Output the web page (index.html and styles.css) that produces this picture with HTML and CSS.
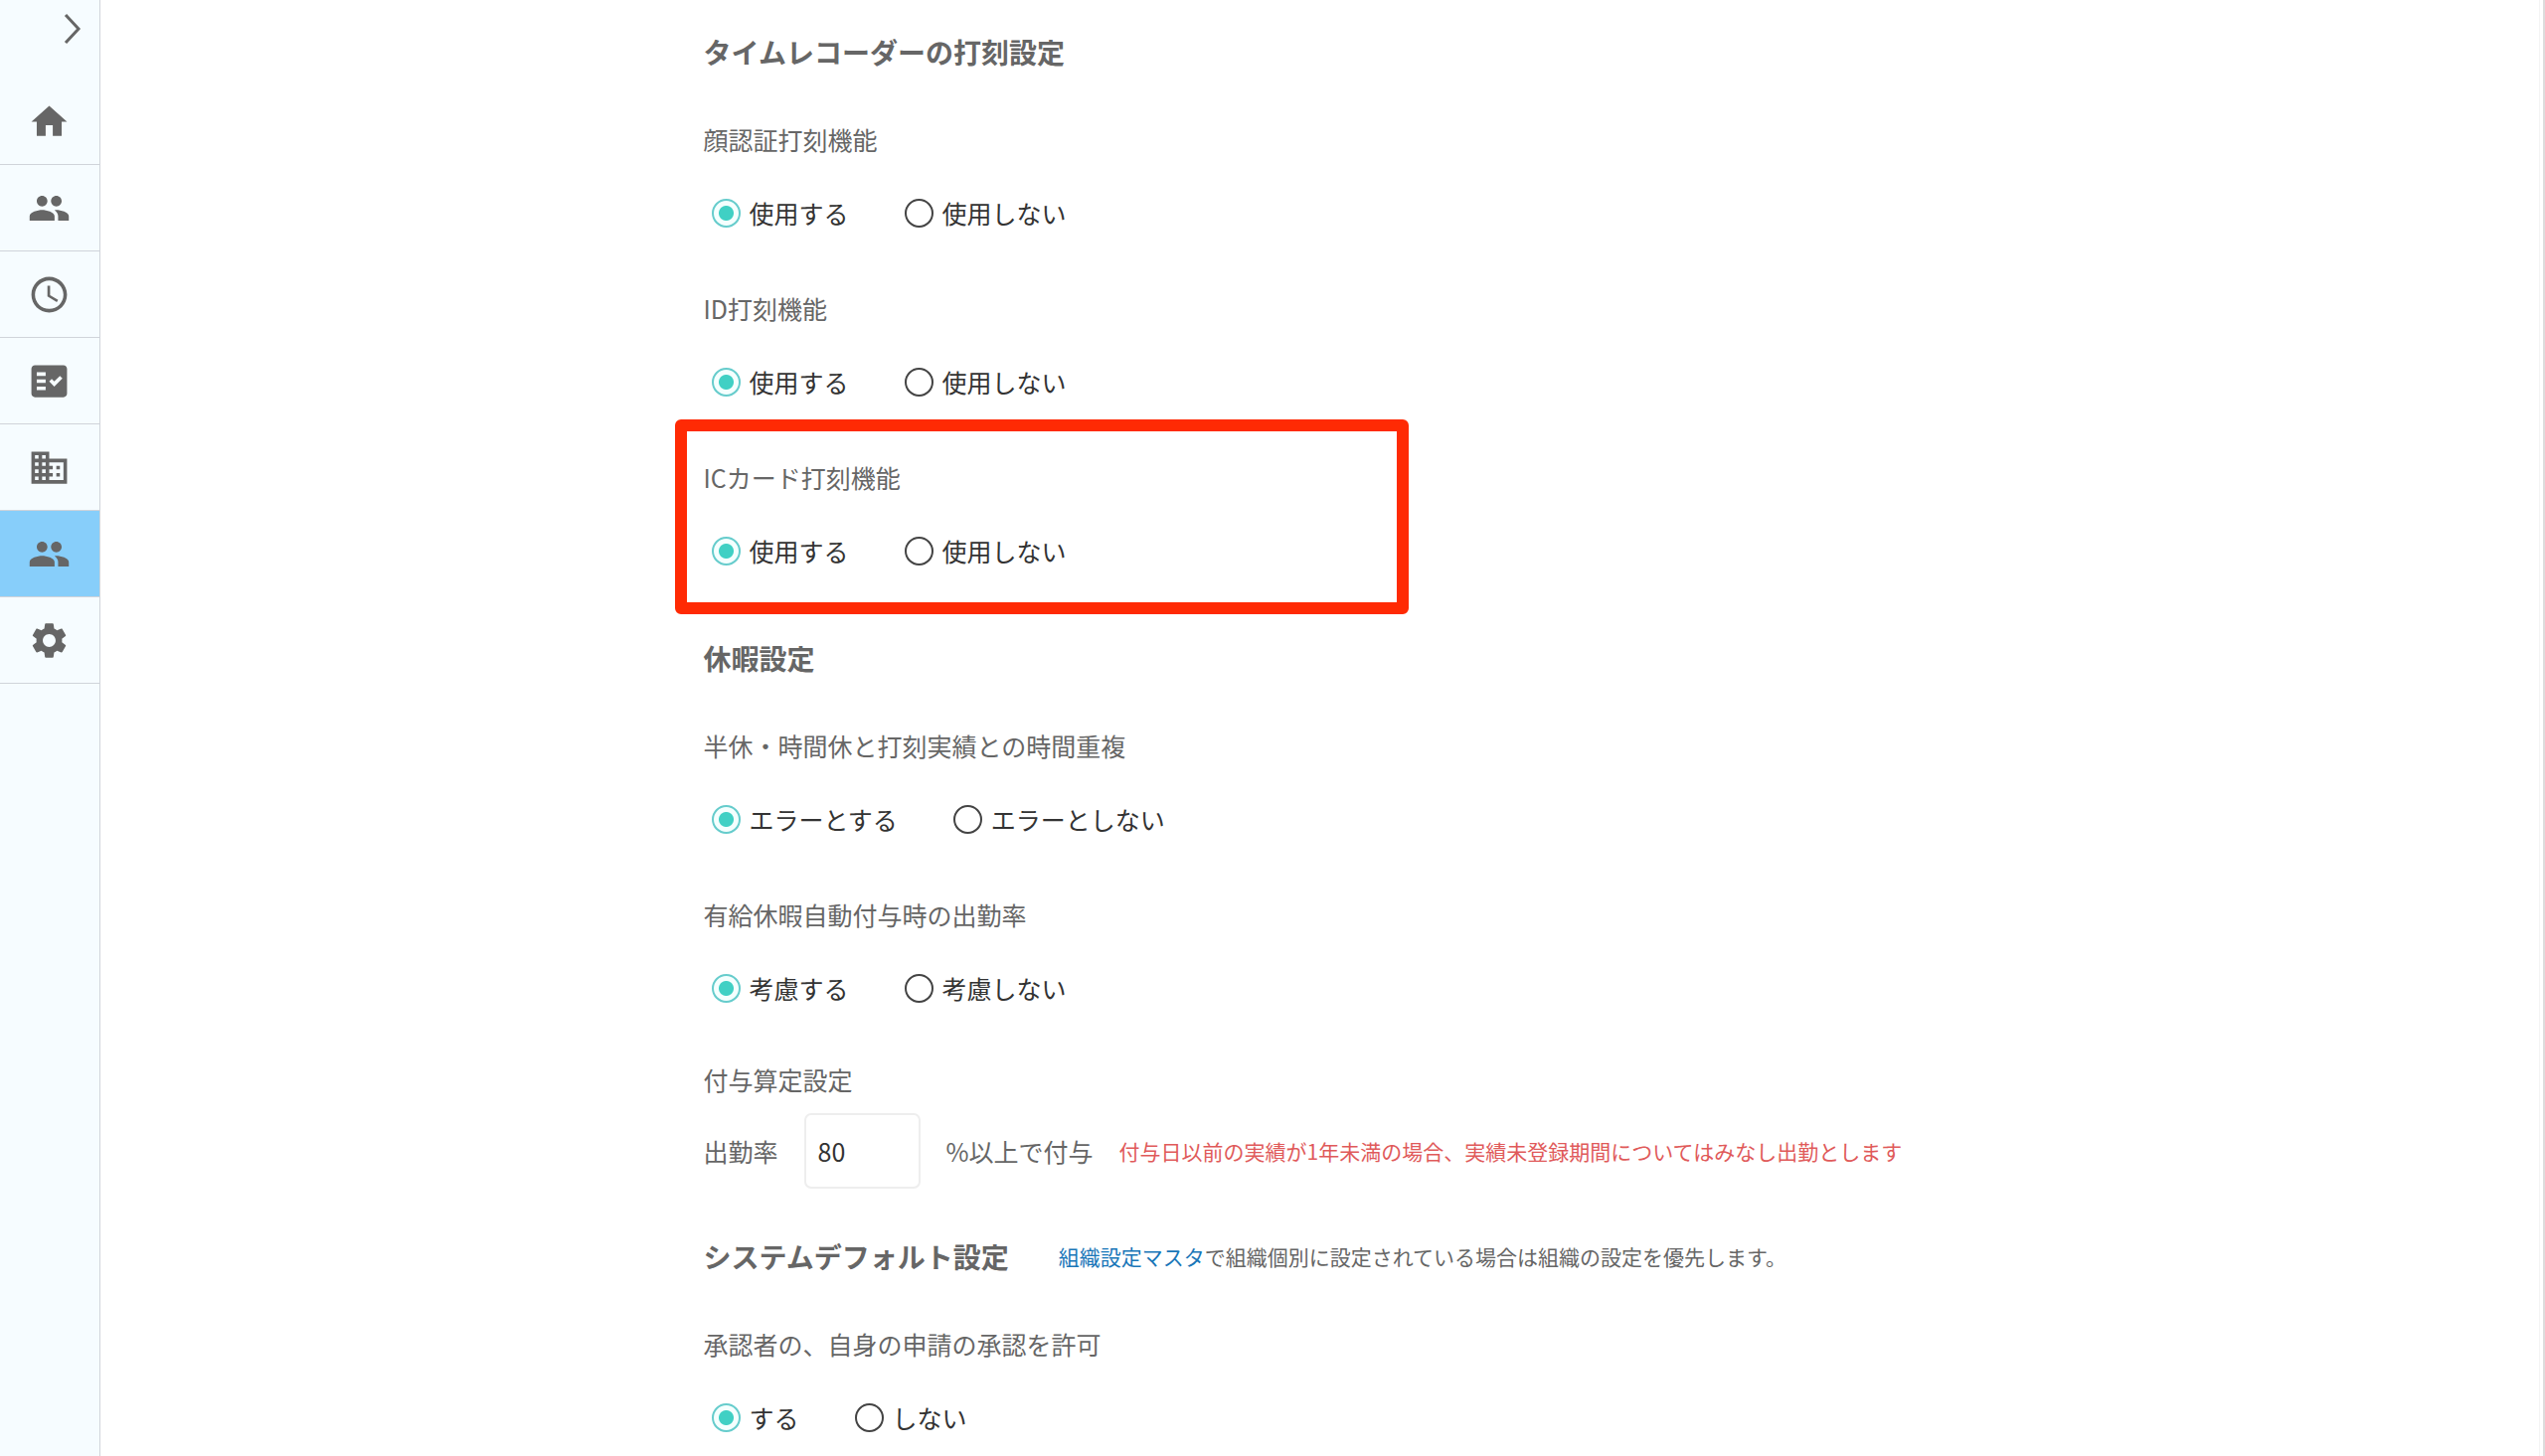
FILE: index.html
```html
<!DOCTYPE html>
<html lang="ja">

<head>
  <meta charset="UTF-8">
  <meta name="viewport" content="width=device-width, initial-scale=1.0">
  <title>打刻・休暇設定</title>
  <link rel="stylesheet" href="styles.css">
</head>

<body>
  <nav class="sidebar">
    <button type="button" class="sidebar-toggle" aria-label="メニューを開く">
      <svg viewBox="0 0 18 32"><path d="M2 2l13 14L2 30"/></svg>
    </button>
    <a href="#" class="sidebar-item" aria-label="ホーム">
      <svg viewBox="0 0 24 24"><path d="M10 20v-6h4v6h5v-8h3L12 3 2 12h3v8z"/></svg>
    </a>
    <a href="#" class="sidebar-item" aria-label="従業員">
      <svg viewBox="0 0 24 24"><path d="M16 11c1.660 0 2.990-1.340 2.990-3S17.660 5 16 5s-3 1.340-3 3 1.340 3 3 3zm-8 0c1.660 0 2.990-1.340 2.990-3S9.660 5 8 5 5 6.340 5 8s1.340 3 3 3zm0 2c-2.330 0-7 1.170-7 3.500V19h14v-2.500c0-2.330-4.670-3.500-7-3.500zm8 0c-.290 0-.620.020-.970.050 1.160.840 1.970 1.970 1.970 3.450V19h6v-2.500c0-2.330-4.670-3.500-7-3.500z"/></svg>
    </a>
    <a href="#" class="sidebar-item" aria-label="勤怠">
      <svg viewBox="0 0 24 24"><path d="M11.990 2C6.470 2 2 6.480 2 12s4.470 10 9.990 10C17.520 22 22 17.520 22 12S17.520 2 11.990 2zM12 20c-4.420 0-8-3.580-8-8s3.580-8 8-8 8 3.580 8 8-3.580 8-8 8zm.500-13H11v6l5.250 3.150.750-1.230-4.500-2.670z"/></svg>
    </a>
    <a href="#" class="sidebar-item" aria-label="申請">
      <svg viewBox="0 0 24 24"><path fill-rule="evenodd" d="M20 3H4c-1.100 0-2 .900-2 2v14c0 1.100.900 2 2 2h16c1.100 0 2-.900 2-2V5c0-1.100-.900-2-2-2zM10 17H5v-2h5v2zm0-4H5v-2h5v2zm0-4H5V7h5v2zm4.820 6L12 12.160l1.410-1.410 1.410 1.420L17.990 9l1.420 1.420L14.820 15z"/></svg>
    </a>
    <a href="#" class="sidebar-item" aria-label="会社">
      <svg viewBox="0 0 24 24"><path d="M12 7V3H2v18h20V7H12zM6 19H4v-2h2v2zm0-4H4v-2h2v2zm0-4H4V9h2v2zm0-4H4V5h2v2zm4 12H8v-2h2v2zm0-4H8v-2h2v2zm0-4H8V9h2v2zm0-4H8V5h2v2zm10 12h-8v-2h2v-2h-2v-2h2v-2h-2V9h8v10zm-2-8h-2v2h2v-2zm0 4h-2v2h2v-2z"/></svg>
    </a>
    <a href="#" class="sidebar-item active" aria-label="マスタ">
      <svg viewBox="0 0 24 24"><path d="M16 11c1.660 0 2.990-1.340 2.990-3S17.660 5 16 5s-3 1.340-3 3 1.340 3 3 3zm-8 0c1.660 0 2.990-1.340 2.990-3S9.660 5 8 5 5 6.340 5 8s1.340 3 3 3zm0 2c-2.330 0-7 1.170-7 3.500V19h14v-2.500c0-2.330-4.670-3.500-7-3.500zm8 0c-.290 0-.620.020-.970.050 1.160.840 1.970 1.970 1.970 3.450V19h6v-2.500c0-2.330-4.670-3.500-7-3.500z"/></svg>
    </a>
    <a href="#" class="sidebar-item" aria-label="設定">
      <svg viewBox="0 0 24 24"><path d="M19.140 12.940c.040-.300.060-.610.060-.940 0-.320-.020-.640-.070-.940l2.030-1.580c.180-.140.230-.410.120-.610l-1.920-3.320c-.120-.220-.370-.290-.590-.220l-2.390.960c-.500-.380-1.030-.700-1.620-.940l-.360-2.540c-.040-.240-.240-.410-.480-.410h-3.840c-.240 0-.430.170-.470.410l-.360 2.540c-.590.240-1.130.570-1.620.940l-2.390-.960c-.220-.080-.470 0-.590.220L2.740 8.870c-.120.210-.080.470.120.610l2.030 1.580c-.050.300-.090.630-.090.940s.020.640.070.940l-2.030 1.580c-.180.140-.230.410-.120.610l1.920 3.320c.120.220.370.290.590.220l2.390-.960c.500.380 1.030.700 1.620.940l.360 2.540c.050.240.240.410.480.410h3.840c.240 0 .440-.170.470-.410l.360-2.540c.590-.240 1.130-.560 1.620-.940l2.390.960c.220.080.470 0 .590-.220l1.920-3.320c.120-.220.070-.470-.120-.610l-2.010-1.580zM12 15.600c-1.980 0-3.600-1.620-3.600-3.600s1.620-3.600 3.600-3.600 3.600 1.620 3.600 3.600-1.620 3.600-3.600 3.600z"/></svg>
    </a>
  </nav>

  <main class="main">
    <form class="settings">
      <section>
        <h2>タイムレコーダーの打刻設定</h2>
        <fieldset class="item">
          <legend>顔認証打刻機能</legend>
          <div class="options">
            <label><input type="radio" name="face" checked>使用する</label>
            <label><input type="radio" name="face">使用しない</label>
          </div>
        </fieldset>
        <fieldset class="item">
          <legend>ID打刻機能</legend>
          <div class="options">
            <label><input type="radio" name="id" checked>使用する</label>
            <label><input type="radio" name="id">使用しない</label>
          </div>
        </fieldset>
        <div class="highlight">
          <fieldset class="item">
            <legend>ICカード打刻機能</legend>
            <div class="options">
              <label><input type="radio" name="iccard" checked>使用する</label>
              <label><input type="radio" name="iccard">使用しない</label>
            </div>
          </fieldset>
        </div>
      </section>

      <section>
        <h2>休暇設定</h2>
        <fieldset class="item">
          <legend>半休・時間休と打刻実績との時間重複</legend>
          <div class="options">
            <label><input type="radio" name="overlap" checked>エラーとする</label>
            <label><input type="radio" name="overlap">エラーとしない</label>
          </div>
        </fieldset>
        <fieldset class="item">
          <legend>有給休暇自動付与時の出勤率</legend>
          <div class="options">
            <label><input type="radio" name="attendance" checked>考慮する</label>
            <label><input type="radio" name="attendance">考慮しない</label>
          </div>
        </fieldset>
        <fieldset class="item rate">
          <legend>付与算定設定</legend>
          <div class="rate-row">
            <label for="rateInput">出勤率</label>
            <input type="text" id="rateInput" value="80">
            <span>%以上で付与</span>
            <span class="warning">付与日以前の実績が1年未満の場合、実績未登録期間についてはみなし出勤とします</span>
          </div>
        </fieldset>
      </section>

      <section>
        <div class="heading-row">
          <h2>システムデフォルト設定</h2>
          <p class="note"><a href="#">組織設定マスタ</a>で組織個別に設定されている場合は組織の設定を優先します。</p>
        </div>
        <fieldset class="item">
          <legend>承認者の、自身の申請の承認を許可</legend>
          <div class="options">
            <label><input type="radio" name="approve" checked>する</label>
            <label><input type="radio" name="approve">しない</label>
          </div>
        </fieldset>
      </section>
    </form>
  </main>
</body>

</html>
```

FILE: styles.css
```css
*,
*::after {
  box-sizing: border-box;
}

body {
  display: flex;
  min-height: 100vh;
  margin: 0;
  font-family: "Noto Sans CJK JP", sans-serif;
  font-size: 25px;
  line-height: 36px;
  color: #666;
  background: #fff;
}

/* サイドバー */
.sidebar {
  flex: none;
  width: 101px;
  background: #f6fcff;
  border-right: 1px solid #d0d4da;
}

.sidebar-toggle {
  display: flex;
  justify-content: flex-end;
  width: 100%;
  height: 79px;
  padding: 13px 18px;
  border: none;
  background: none;
  cursor: pointer;
}

.sidebar-toggle svg {
  width: 18px;
  height: 32px;
  fill: none;
  stroke: #666;
  stroke-width: 3;
}

.sidebar-item {
  display: flex;
  align-items: center;
  justify-content: center;
  height: 87px;
  padding-right: 1px;
  border-bottom: 1px solid #d0d4da;
}

.sidebar-item svg {
  width: 43px;
  height: 43px;
  fill: #666;
}

.sidebar-item.active {
  background: #87cefa;
}

/* メイン */
.main {
  flex: 1;
  margin-right: 3px;
  padding: 32px 0 0;
  border-right: 1px solid #f4f4f4;
}

body::after {
  content: "";
  width: 2px;
  background: #ddd;
}

.settings {
  max-width: 1240px;
  margin: 0 auto;
}

section {
  display: flow-root;
}

section + section {
  margin-top: 10px;
}

section:last-child .item {
  margin-bottom: 0;
}

h2 {
  margin: 0 0 50px;
  font-size: 28px;
  font-weight: bold;
  line-height: 40px;
}

.heading-row {
  display: flex;
  align-items: center;
  gap: 50px;
  margin-bottom: 50px;
}

.heading-row h2 {
  margin: 0;
}

.note,
.warning {
  margin: 0;
  font-size: 21px;
}

.note a {
  color: #1976b8;
  text-decoration: none;
}

.warning {
  color: #e05a5a;
}

.item {
  min-width: 0;
  margin: 0 0 60px;
  padding: 0;
  border: none;
}

.item legend {
  margin-bottom: 38px;
  padding: 0;
}

.options {
  display: flex;
  gap: 56px;
  padding-left: 8px;
  color: #333;
}

.options label {
  display: flex;
  align-items: center;
  gap: 9px;
  cursor: pointer;
}

input[type="radio"] {
  appearance: none;
  width: 29px;
  height: 29px;
  margin: 0;
  border: 2px solid #444;
  border-radius: 50%;
  background: #fff;
}

input[type="radio"]:checked {
  border-color: #6cc;
  background: radial-gradient(circle, #40d0c4 0 7px, #f4fffe 8px);
}

.item.rate {
  margin-bottom: 38px;
}

.rate legend {
  margin-bottom: 20px;
  line-height: 28px;
}

.rate-row {
  display: flex;
  align-items: center;
  gap: 26px;
}

#rateInput {
  width: 117px;
  height: 76px;
  padding: 0 12px;
  border: 2px solid #eee;
  border-radius: 7px;
  font: inherit;
  color: #333;
}

/* 注目箇所を囲む赤枠 */
.highlight {
  position: relative;
}

.highlight::after {
  content: "";
  position: absolute;
  top: -40px;
  bottom: -46px;
  left: -29px;
  width: 738px;
  border: 12px solid #ff2a04;
  border-radius: 6px;
  pointer-events: none;
}
```
